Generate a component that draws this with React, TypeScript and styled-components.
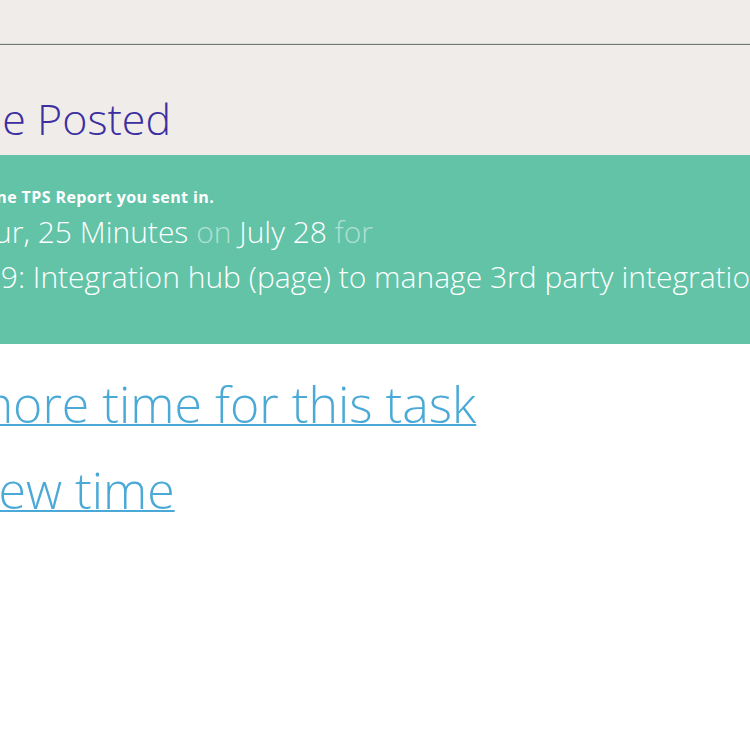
import React from "react";
import styled, { createGlobalStyle } from "styled-components";

const Global = createGlobalStyle`
  html, body { margin: 0; padding: 0; background: #ffffff; overflow: hidden; }
  body { font-family: "Open Sans", "Noto Sans", sans-serif; }
`;

const Page = styled.div`
  width: 750px;
  overflow: hidden;
`;

const Shift = styled.div`
  margin-left: -126px;
  width: 1400px;
`;

const TopBar = styled.div`
  height: 43px;
  background: #f0ecea;
  border-bottom: 1px solid #d9d9d6;
  box-shadow: 0 1px 0 #6f7a76;
  margin-bottom: 1px;
`;

const TitleSection = styled.section`
  background: #f0ecea;
  padding: 47px 0 9px 58px;
`;

const Title = styled.h1`
  margin: 0;
  font-size: 43px;
  line-height: 54px;
  font-weight: 300;
  color: #3c2f9f;
`;

const Banner = styled.section`
  background: #62c3a7;
  padding: 30px 0 45px 56px;
  color: #ffffff;
`;

const Lead = styled.p`
  margin: 0 0 0 -78px;
  font-size: 16px;
  line-height: 24px;
  font-weight: 700;
  letter-spacing: 0.4px;
  white-space: nowrap;
`;

const Detail = styled.p`
  margin: 0;
  font-size: 30px;
  line-height: 45px;
  font-weight: 300;
  white-space: nowrap;
`;

const Soft = styled.span`
  color: rgba(255, 255, 255, 0.5);
`;

const Links = styled.nav`
  padding: 17px 0 0 1px;
`;

const BigLink = styled.a`
  display: block;
  width: max-content;
  font-size: 50px;
  line-height: 86px;
  font-weight: 300;
  color: #4aa9d6;
  text-decoration: underline;
  text-decoration-thickness: 2px;
`;

export default function App() {
  return (
    <Page>
      <Global />
      <Shift>
        <TopBar />
        <TitleSection>
          <Title>Time Posted</Title>
        </TitleSection>
        <Banner>
          <Lead>Time logged for one TPS Report you sent in.</Lead>
          <Detail>
            1 Hour, 25 Minutes <Soft>on</Soft> July 28 <Soft>for</Soft>
          </Detail>
          <Detail>#1239: Integration hub (page) to manage 3rd party integrations</Detail>
        </Banner>
        <Links>
          <BigLink href="#">Log more time for this task</BigLink>
          <BigLink href="#">Log new time</BigLink>
        </Links>
      </Shift>
    </Page>
  );
}
